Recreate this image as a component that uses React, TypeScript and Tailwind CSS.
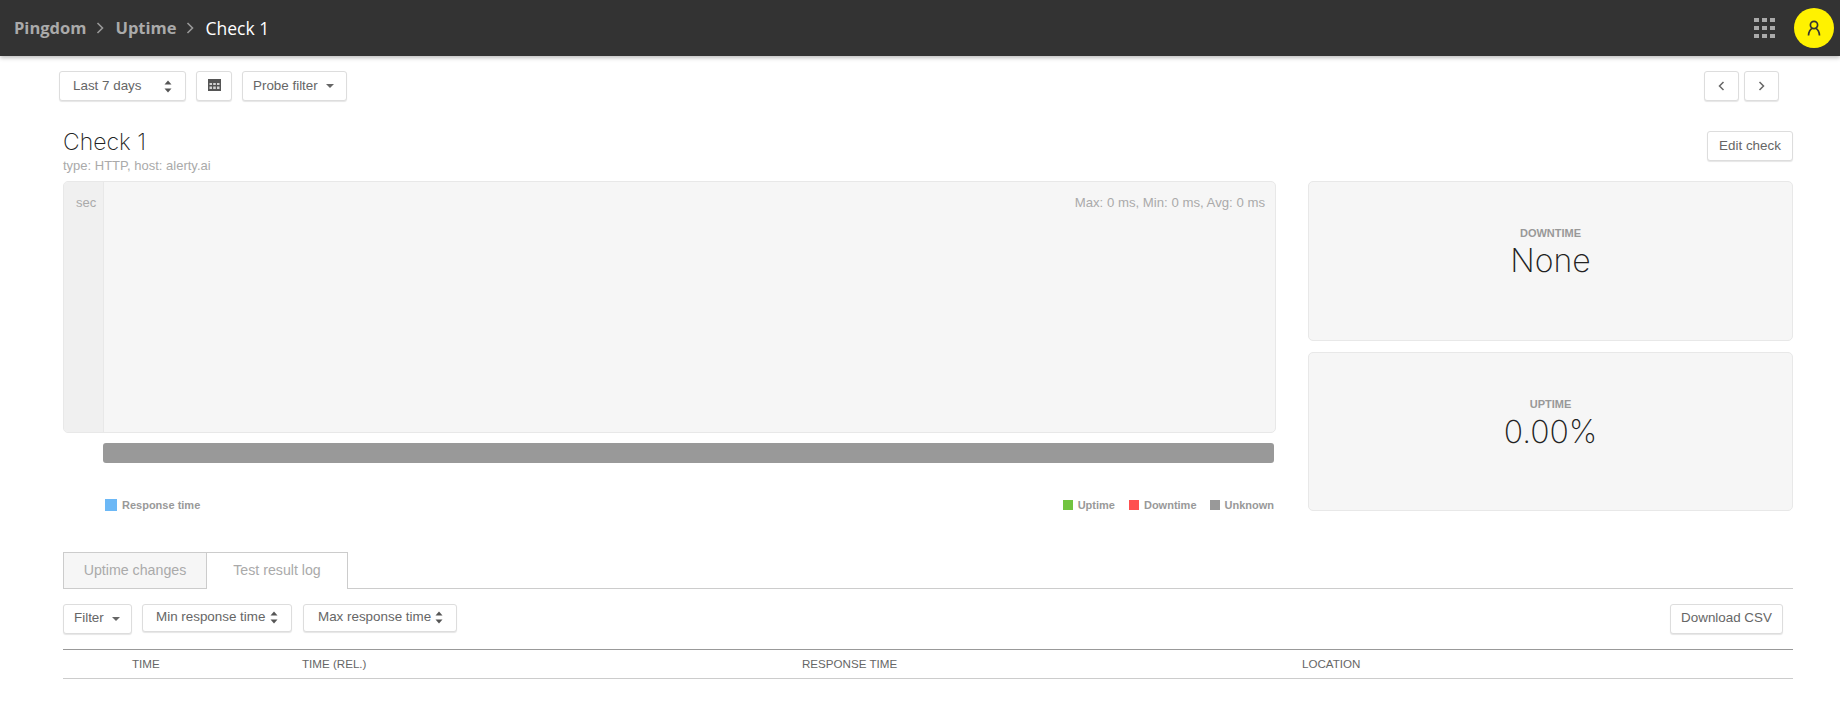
import type { ReactNode } from 'react';

const UpDown = () => (
  <svg width="8" height="13" viewBox="0 0 8 13" className="shrink-0">
    <path d="M4 0.5 7.5 4.5H0.5Z M0.5 8.5H7.5L4 12.5Z" fill="#555" />
  </svg>
);

const Caret = () => (
  <svg width="8" height="4" viewBox="0 0 8 4" className="shrink-0">
    <path d="M0 0H8L4 4Z" fill="#666" />
  </svg>
);

const Crumb = () => (
  <svg width="8" height="14" viewBox="0 0 8 14" className="shrink-0">
    <path d="M1.5 2 6.5 7 1.5 12" fill="none" stroke="#999" strokeWidth="1.6" />
  </svg>
);

const Btn = ({ className, children }: { className: string; children: ReactNode }) => (
  <div className={`flex items-center rounded-[3px] border border-[#ddd] bg-white text-[13.4px] text-[#666] shadow-[0_1px_1px_rgba(0,0,0,0.1)] ${className}`}>
    {children}
  </div>
);

const StatCard = ({ label, value, className }: { label: string; value: string; className: string }) => (
  <div className={`flex flex-col items-center rounded-[5px] border border-[#e8e8e8] bg-[#f6f6f6] ${className}`}>
    <div className="mt-[45px] text-[11px] leading-[13px] font-bold text-[#999]">{label}</div>
    <div className="mt-[3px] font-['Inter'] text-[32px] leading-[36px] font-extralight text-[#222]">{value}</div>
  </div>
);

const Legend = ({ color, label, className }: { color: string; label: string; className: string }) => (
  <div className={`flex items-center text-[11px] font-bold text-[#999] ${className}`}>
    <span className={`mr-[5px] h-[10px] w-[10px] ${color}`} />
    {label}
  </div>
);

export default function App() {
  return (
    <div className="min-h-screen w-[1840px] overflow-hidden bg-white font-['Liberation_Sans',Arial,sans-serif]">
      <header className="flex h-14 items-center justify-between bg-[#333] pr-[6px] pl-[14px] shadow-[0_2px_4px_rgba(0,0,0,0.25)]">
        <div className="flex items-center font-['Open_Sans',sans-serif] text-[17.5px]">
          <span className="text-[16.5px] font-bold text-[#aaa]">Pingdom</span>
          <span className="mr-[11px] ml-[10px]"><Crumb /></span>
          <span className="text-[16.5px] font-bold text-[#aaa]">Uptime</span>
          <span className="mr-[11px] ml-[10px]"><Crumb /></span>
          <span className="text-white">Check 1</span>
        </div>
        <div className="flex items-center gap-[19px]">
          <div className="grid grid-cols-[5px_5px_5px] gap-x-[3px] gap-y-[4px]">
            {Array.from({ length: 9 }).map((_, i) => (
              <span key={i} className="h-[4px] bg-[#aaa]" />
            ))}
          </div>
          <div className="flex h-10 w-10 items-center justify-center rounded-full bg-[#fff200]">
            <svg width="14" height="16" viewBox="0 0 14 16" fill="none" stroke="#333" strokeWidth="1.7">
              <circle cx="7" cy="5" r="3.6" />
              <path d="M1.5 15.5c0-3.5 2-6.5 3.5-7 M12.5 15.5c0-3.5-2-6.5-3.5-7" />
            </svg>
          </div>
        </div>
      </header>

      <main className="pr-[47px] pl-[63px]">
        <div className="mt-[15px] -ml-[4px] flex items-center">
          <Btn className="h-[30px] w-[127px] justify-between pr-[13px] pl-[13px]">
            Last 7 days
            <UpDown />
          </Btn>
          <Btn className="ml-[10px] h-[30px] w-[36px] justify-center pb-[3px]">
            <svg width="13" height="12" viewBox="0 0 13 12">
              <path d="M0 0H13V12H0Z" fill="#555" />
              <path d="M1.5 4H4V6H1.5Z M5.2 4H7.8V6H5.2Z M9 4H11.5V6H9Z M1.5 7.5H4V10H1.5Z M5.2 7.5H7.8V10H5.2Z M9 7.5H11.5V10H9Z" fill="#fff" opacity="0.75" />
            </svg>
          </Btn>
          <Btn className="ml-[10px] h-[30px] w-[105px] justify-between pr-[12px] pl-[10px]">
            Probe filter
            <Caret />
          </Btn>
          <Btn className="ml-auto h-[30px] w-[35px] justify-center">
            <svg width="7" height="10" viewBox="0 0 7 10" fill="none" stroke="#666" strokeWidth="1.5"><path d="M5.5 1 1.5 5 5.5 9" /></svg>
          </Btn>
          <Btn className="mr-[14px] ml-[5px] h-[30px] w-[35px] justify-center">
            <svg width="7" height="10" viewBox="0 0 7 10" fill="none" stroke="#666" strokeWidth="1.5"><path d="M1.5 1 5.5 5 1.5 9" /></svg>
          </Btn>
        </div>

        <div className="mt-[24px] flex items-start justify-between">
          <div>
            <h1 className="mt-[2px] font-['Inter'] text-[23px] leading-[30px] font-extralight text-[#222]">Check 1</h1>
            <p className="text-[13px] leading-[17px] text-[#aaa]">type: HTTP, host: alerty.ai</p>
          </div>
          <Btn className="mt-[6px] h-[30px] w-[86px] justify-center">Edit check</Btn>
        </div>

        <div className="mt-[7px] flex gap-[32px]">
          <div className="w-[1213px]">
            <div className="flex h-[252px] overflow-hidden rounded-[5px] border border-[#e8e8e8] bg-[#f6f6f6]">
              <div className="w-[40px] border-r border-[#e8e8e8] bg-[#f0f0f0] pt-[12px] pl-[12px] text-[13px] leading-[17px] text-[#aaa]">sec</div>
              <div className="flex-1 pt-[12px] pr-[10px] text-right text-[13.2px] leading-[17px] text-[#aaa]">
                Max: 0 ms, Min: 0 ms, Avg: 0 ms
              </div>
            </div>
            <div className="mt-[10px] mr-[2px] ml-[40px] h-[20px] rounded-[3px] bg-[#999]" />
            <div className="mt-[34px] mr-[2px] ml-[42px] flex items-center justify-between">
              <div className="flex items-center text-[11px] font-bold text-[#999]">
                <span className="mr-[5px] h-[12px] w-[12px] bg-[#6cb8f6]" />
                Response time
              </div>
              <div className="flex items-center">
                <Legend color="bg-[#72c440]" label="Uptime" className="mr-[14px]" />
                <Legend color="bg-[#ff5050]" label="Downtime" className="mr-[13px]" />
                <Legend color="bg-[#999]" label="Unknown" className="" />
              </div>
            </div>
          </div>
          <div className="flex w-[485px] flex-col gap-[11px]">
            <StatCard label="DOWNTIME" value="None" className="h-[160px]" />
            <StatCard label="UPTIME" value="0.00%" className="h-[159px]" />
          </div>
        </div>

        <div className="mt-[38px] flex h-[37px] border-b border-[#ccc]">
          <div className="flex h-[37px] w-[143px] items-center justify-center border border-r-0 border-[#ccc] bg-[#f6f6f6] pt-[1px] text-[14.2px] text-[#aaa]">Uptime changes</div>
          <div className="flex h-[37px] w-[142px] items-center justify-center border border-b-0 border-[#ccc] bg-white pt-[1px] text-[14.2px] text-[#aaa]">Test result log</div>
        </div>

        <div className="mt-[15px] flex items-start">
          <Btn className="h-[30px] w-[69px] justify-between pr-[11px] pl-[10px]">
            Filter
            <Caret />
          </Btn>
          <Btn className="ml-[10px] h-[28px] w-[150px] justify-between pr-[13px] pl-[13px]">
            Min response time
            <UpDown />
          </Btn>
          <Btn className="ml-[11px] h-[28px] w-[154px] justify-between pr-[13px] pl-[14px]">
            Max response time
            <UpDown />
          </Btn>
          <Btn className="mr-[10px] ml-auto h-[30px] w-[113px] justify-center">Download CSV</Btn>
        </div>

        <div className="mt-[15px] grid h-[30px] grid-cols-[69px_170px_500px_500px_1fr] items-center border-t border-b border-t-[#999] border-b-[#ccc] text-[11.6px] text-[#666]">
          <div />
          <div>TIME</div>
          <div>TIME (REL.)</div>
          <div>RESPONSE TIME</div>
          <div>LOCATION</div>
        </div>
      </main>
    </div>
  );
}
